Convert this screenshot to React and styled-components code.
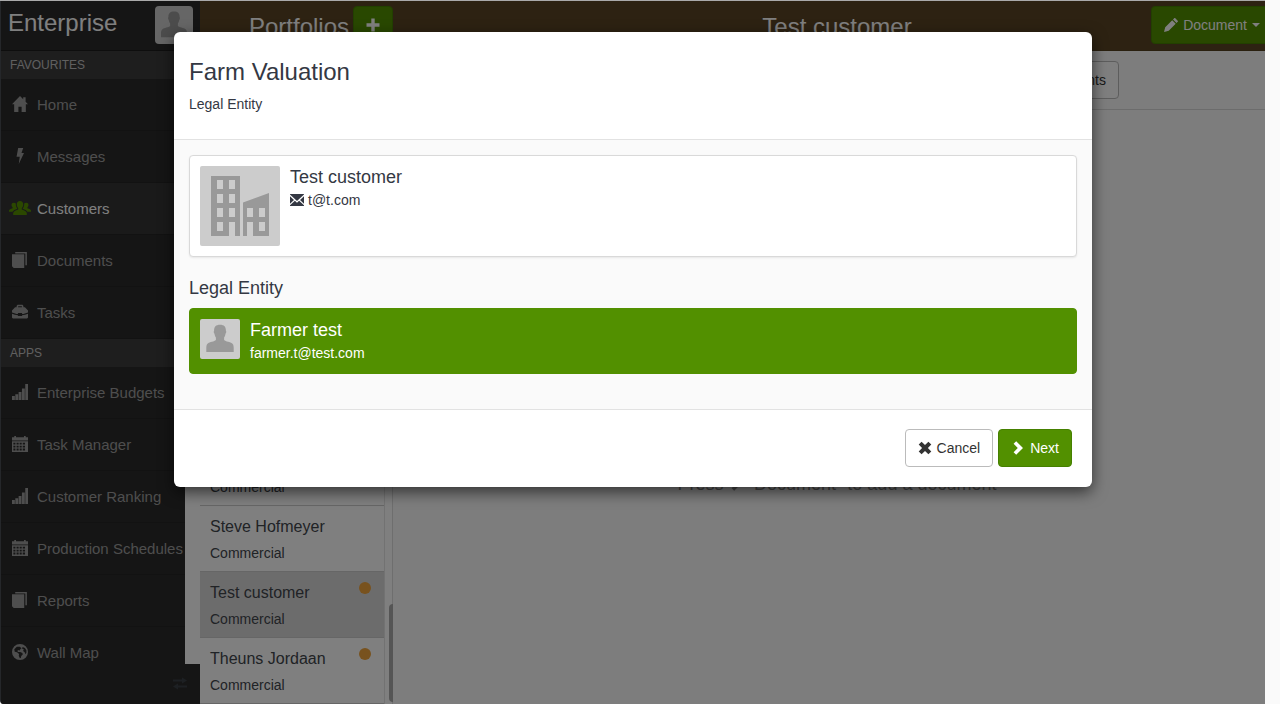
import React from 'react';
import styled, { createGlobalStyle } from 'styled-components';

const GlobalStyle = createGlobalStyle`
  *, *::before, *::after { box-sizing: border-box; }
  body {
    margin: 0;
    background: #fafafa;
    color: #343843;
    font: 14px/20px "Helvetica Neue", "Liberation Sans", Arial, sans-serif;
  }
  h1, h2, h3, p, ul { margin: 0; padding: 0; font-weight: 400; }
  ul { list-style: none; }
  button { font: inherit; cursor: pointer; }
`;

/* ---------- icons ---------- */

const Glyph = styled.svg`
  width: ${p => p.$size || 14}px;
  height: ${p => p.$size || 14}px;
  flex: none;
  fill: currentColor;
`;

const ICONS = {
  home: <path d="M7 0 0 7.2h1.900V14h3.700V9.300h2.800V14h3.700V7.200H14L11.900 5V1.200H9.800v1.700z" />,
  bolt: <path d="M5.400 0h4.400L8.300 4.300h2.200L5.900 14l.9-6.400H4z" />,
  documents: <path d="M2.800 0H13v11.500h-1.300V1.300H2.800zM0 2h10.700v12H1.500L0 12.500z" />,
  briefcase: (
    <path d="M4 2.800V2.200C4 1.200 4.700.7 5.500.7h3c.9 0 1.500.6 1.500 1.500v.6h1.300L14 5.600v1.800c-2 .8-3.500 1.200-5.200 1.400v-.9H5.200v.9C3.500 8.600 2 8.200 0 7.400V5.600l2.700-2.800zm1.300 0h3.400v-.5c0-.3-.2-.4-.4-.4H5.700c-.3 0-.4.200-.4.400zM0 8.500c1.700.7 3.400 1.100 5.200 1.300v.7h3.600v-.7c1.800-.2 3.500-.6 5.200-1.300v3.200c0 .6-.4 1-1 1H1c-.6 0-1-.4-1-1z" />
  ),
  signal: <path d="M0 10.500h2.500V14H0zM2.900 9h2.500v5H2.900zM5.800 7h2.500v7H5.800zM8.700 4h2.500v10H8.700zM11.600 0H14v14h-2.400z" />,
  calendar: (
    <path fillRule="evenodd" d="M0 1h2V0h1.500v1h7V0H12v1h2v3H0zM0 4.700h14V14H0zM1.200 6v1.500h1.800V6zm2.800 0v1.500h1.800V6zm2.700 0v1.500h1.800V6zm2.700 0v1.500h2V6zM1.200 8.500V10h1.800V8.500zm2.800 0V10h1.800V8.500zm2.700 0V10h1.800V8.500zm2.700 0V10h2V8.500zM1.200 11v1.700h1.800V11zm2.800 0v1.700h1.800V11zm2.700 0v1.700h1.800V11zm2.700 0v1.700h2V11z" />
  ),
  globe: (
    <path fillRule="evenodd" d="M7 0a7 7 0 1 1 0 14A7 7 0 0 1 7 0zM4.200 2.300 2 4.500l.4 2.200 2 .6 1.800 1.400-.3 1.500 1 2.200.8-.2.400-1.700 1.300-1.400-.3-1.200-1.900-.8-2-.2-.5-1 1-.7.800.7.400-.9L8.300 3.800 6.800 2.300zm5.200.3L8.700 4l1.600.7-.6 1.400 1.400 1.200.7 1.600.8-1.200V5.400l-1.300-2z" />
  ),
  transfer: <path d="M0 3.500h9V1.500L14 4.500 9 7.500v-2H0zM14 9.500H5v-2l-5 3 5 3v-2h9z" />,
  pencil: <path d="m11.300.3 2.400 2.400c.4.4.4.700 0 1.100l-1.200 1.200L9 1.500 10.200.3c.4-.4.7-.4 1.100 0zM8.200 2.300l3.500 3.500-7 7L0 14l1.200-4.700z" />,
  plus: <path d="M5.300.5h3.400v4.800h4.800v3.400H8.700v4.800H5.300V8.700H.5V5.300h4.800z" />,
  envelope: <path d="M0 1h14v.6L7 8 0 1.600zM0 3.200l4 3.700-4 3.900zm14 0v7.600l-4-3.900zM4.900 7.800 7 9.700l2.100-1.900 4.900 4.500v.7H0v-.7z" />,
  remove: <path d="M3.600.7 7 4.100 10.400.7l2.900 2.900L9.900 7l3.400 3.400-2.900 2.900L7 9.900l-3.400 3.400-2.900-2.900L4.100 7 .7 3.600z" />,
  next: <path d="M5.200.2 12 7l-6.800 6.800-2.600-2.600L6.800 7 2.600 2.800z" />,
};

const Icon = ({ name, size }) => (
  <Glyph $size={size} viewBox="0 0 14 14" aria-hidden="true">{ICONS[name]}</Glyph>
);

const GroupIcon = () => (
  <CustomersGlyph viewBox="0 0 22 14" aria-hidden="true">
    <path d="M11 0c2 0 3.200 1.300 3.200 3.300 0 1.600-.5 2.900-1.400 3.700v1.400c2.800 1 4.700 1.900 5 3.500V14H4.200v-2.100c.3-1.600 2.200-2.500 5-3.500V7C8.300 6.200 7.800 4.900 7.800 3.300 7.800 1.300 9 0 11 0z" />
    <path d="M4.800 1.700c.9 0 1.600.300 2 .900 0 2.100.2 3.500 1.400 4.800v.3c-2.300.9-4 1.700-4.600 3.100H0V9.600c.3-1 1.700-1.600 3.600-2.300v-1C2.900 5.700 2.500 5 2.500 4c0-1.500.9-2.300 2.300-2.300zM17.200 1.700c-.9 0-1.600.300-2 .9 0 2.100-.2 3.500-1.400 4.800v.3c2.300.9 4 1.700 4.600 3.100H22V9.600c-.3-1-1.700-1.600-3.600-2.300v-1c.7-.6 1.100-1.300 1.100-2.300 0-1.500-.9-2.300-2.300-2.300z" />
  </CustomersGlyph>
);

const CustomersGlyph = styled.svg`
  width: 22px;
  height: 14px;
  flex: none;
  fill: #569100;
`;

const Thumb = styled.svg`
  width: ${p => p.$size}px;
  height: ${p => p.$size}px;
  flex: none;
  border-radius: ${p => p.$radius || 2}px;
  background: #ccc;
  fill: #999;
`;

const PersonThumb = ({ size, radius }) => (
  <Thumb $size={size} $radius={radius} viewBox="0 0 40 40" role="img" aria-label="Person">
    <path d="M20 5.700c4.200 0 6 2 5.900 6 .6.600.4 2.300-.4 3-.3 1.800-.7 2.800-1.400 3.700v2.600c1.600 1.800 6.100 1.500 8.400 3.700.9.900 1.200 2.300 1.200 4.300v4H6.300v-4c0-2 .3-3.400 1.200-4.300 2.300-2.200 6.800-1.900 8.400-3.700v-2.600c-.7-.9-1.100-1.900-1.400-3.700-.8-.7-1-2.400-.4-3-.1-4 1.700-6 5.900-6z" />
  </Thumb>
);

const CompanyThumb = () => (
  <Thumb $size={80} viewBox="0 0 80 80" role="img" aria-label="Company">
    <path fillRule="evenodd" d="M11 10h29v60h-5V56h-6v14H11zM17 14v9h6v-9zm12 0v9h6v-9zM17 28v9h6v-9zm12 0v9h6v-9zM17 42v9h6v-9zm12 0v9h6v-9zM17 56v9h6v-9z" />
    <path fillRule="evenodd" d="M43 36.500 69 27v43H53V56h-6v14h-4zM47 42v9h6v-9zm12 0v9h6v-9zm0 14v9h6v-9z" />
  </Thumb>
);

/* ---------- application frame ---------- */

const Shell = styled.div`
  position: relative;
  display: flex;
  height: 100vh;
  min-height: 560px;
  margin-right: 15px;
  padding-left: 1px;
  overflow: hidden;
  border-top: 1px solid #aaa;
  border-bottom-left-radius: 4px;
  background: #4a4f55;
`;

const Sidebar = styled.aside`
  display: flex;
  flex-direction: column;
  flex: none;
  width: 199px;
  background: #2b2b2b;
`;

const Brand = styled.div`
  display: flex;
  align-items: flex-start;
  justify-content: space-between;
  flex: none;
  height: 50px;
  padding: 5px 7px;
  border-bottom: 1px solid #1c1c1c;
  color: #fff;
  font-size: 24px;
  line-height: 34px;
`;

const NavScroll = styled.nav`
  flex: 1;
  min-height: 0;
  padding-right: 15px;
  overflow: hidden;
  background: #fff;
`;

const NavGroup = styled.section`
  background: #2b2b2b;
`;

const NavHeading = styled.h2`
  height: 28px;
  padding-left: 9px;
  background: #3c3c3c;
  color: #c0c0c0;
  font-size: 12px;
  line-height: 28px;
`;

const NavLink = styled.a`
  display: flex;
  align-items: center;
  height: 52px;
  border-bottom: 1px solid #252525;
  background: ${p => (p.$active ? '#343434' : 'transparent')};
  color: ${p => (p.$active ? '#fff' : '#9c9c9c')};
  font-size: 15px;
  text-decoration: none;
  white-space: nowrap;
`;

const NavIcon = styled.span`
  display: flex;
  justify-content: center;
  flex: none;
  width: 36px;
  padding: 0 0 2px 2px;
`;

const SidebarFoot = styled.div`
  display: flex;
  align-items: center;
  justify-content: flex-end;
  flex: none;
  height: 40px;
  padding: 0 13px 2px 0;
  color: #3b4047;
`;

const ListPanel = styled.section`
  display: flex;
  flex-direction: column;
  flex: none;
  width: 193px;
  background: #fff;
`;

const PanelHeader = styled.header`
  display: flex;
  align-items: flex-start;
  justify-content: flex-end;
  gap: 4px;
  flex: none;
  height: 50px;
  padding: 5px 0;
  border-bottom: 1px solid #54401f;
  background: #5b4524;
`;

const PanelTitle = styled.h2`
  color: #fff;
  font-size: 24px;
  line-height: 42px;
  white-space: nowrap;
`;

const Button = styled.button`
  display: inline-flex;
  align-items: center;
  justify-content: center;
  gap: 5px;
  flex: none;
  height: 38px;
  padding: 0 12px;
  border: 1px solid ${p => (p.$primary ? '#458000' : '#bbb')};
  border-radius: 4px;
  background: ${p => (p.$primary ? '#529000' : '#fff')};
  color: ${p => (p.$primary ? '#fff' : '#333')};
  white-space: nowrap;
`;

const ListBody = styled.div`
  display: flex;
  flex: 1;
  min-height: 0;
  align-items: flex-end;
  justify-content: space-between;
  overflow: hidden;
  box-shadow: inset -1px 0 #ddd;
`;

const CustomerList = styled.ul`
  flex: none;
  width: 185px;
  border-right: 1px solid #e4e4e4;
`;

const CustomerRow = styled.li`
  display: flex;
  align-items: flex-end;
  justify-content: space-between;
  height: 66px;
  padding: 8px 13px 5px 10px;
  border-bottom: 1px solid #ccc;
  background: ${p => (p.$selected ? '#d9d9d9' : 'transparent')};
  color: #42464c;
`;

const RowName = styled.h3`
  font-size: 16px;
  line-height: 26px;
  white-space: nowrap;
`;

const RowType = styled.p`
  line-height: 26px;
`;

const Dot = styled.span`
  align-self: flex-start;
  width: 12px;
  height: 12px;
  margin-top: 2px;
  border-radius: 50%;
  background: #f0a43c;
`;

const ScrollThumb = styled.span`
  width: 4px;
  height: 98px;
  margin-bottom: 2px;
  border-radius: 4px 0 0 4px;
  background: #aaa;
`;

const Main = styled.main`
  display: flex;
  flex-direction: column;
  flex: 1;
  min-width: 0;
  margin-right: -16px;
  background: #fafafa;
`;

const MainHeader = styled.header`
  display: grid;
  grid-template-columns: 1fr auto 1fr;
  align-items: start;
  flex: none;
  height: 50px;
  padding: 5px 8px;
  border-bottom: 1px solid #54401f;
  background: #5b4524;

  ${Button} { grid-column: 3; justify-self: end; }
  ${PanelTitle} { grid-column: 2; }
`;

const Caret = styled.span`
  border: 4px solid transparent;
  border-top-color: currentColor;
  border-bottom: 0;
`;

const TabBar = styled.div`
  display: flex;
  justify-content: flex-end;
  flex: none;
  padding: 10px 162px 10px 10px;
  border-bottom: 1px solid #d8d8d8;
`;

const EmptyHint = styled.p`
  display: flex;
  align-items: center;
  justify-content: center;
  gap: 5px;
  padding-top: 362px;
  color: #8c8c8c;
  font-size: 18px;
  line-height: 24px;
`;

/* ---------- dialog ---------- */

const Backdrop = styled.div`
  position: absolute;
  inset: 0;
  padding: 31px 20px 20px 21px;
  background: rgba(0, 0, 0, 0.5);
`;

const Dialog = styled.div`
  max-width: 918px;
  margin: 0 auto;
  overflow: hidden;
  border-radius: 6px;
  background: #fff;
  box-shadow: 0 5px 15px rgba(0, 0, 0, 0.6);
`;

const DialogHeader = styled.header`
  height: 108px;
  padding: 24px 15px;
  border-bottom: 1px solid #e2e2e2;
`;

const DialogTitle = styled.h1`
  margin-bottom: 6px;
  font-size: 24px;
  line-height: 32px;
`;

const DialogBody = styled.div`
  padding: 15px 15px 35px;
  background: #fafafa;
`;

const Card = styled.div`
  display: flex;
  gap: 10px;
  padding: 10px;
  border: 1px solid ${p => (p.$selected ? '#529000' : '#d9d9d9')};
  border-radius: 4px;
  background: ${p => (p.$selected ? '#529000' : '#fff')};
  color: ${p => (p.$selected ? '#fff' : 'inherit')};
  box-shadow: ${p => (p.$selected ? 'none' : '0 1px 2px rgba(0, 0, 0, 0.08)')};
`;

const CardText = styled.div`
  display: flex;
  flex-direction: column;
  gap: 2px;
`;

const Subheading = styled.h2`
  font-size: 18px;
  line-height: 22px;
`;

const BodyHeading = styled(Subheading)`
  margin: 20px 0 9px;
`;

const Contact = styled.p`
  display: flex;
  align-items: center;
  gap: 4px;
`;

const DialogFooter = styled.footer`
  display: flex;
  justify-content: flex-end;
  gap: 5px;
  padding: 19px 20px 20px;
  border-top: 1px solid #e2e2e2;
`;

const favourites = [
  ['Home', 'home'],
  ['Messages', 'bolt'],
  ['Customers', 'group'],
  ['Documents', 'documents'],
  ['Tasks', 'briefcase'],
];

const apps = [
  ['Enterprise Budgets', 'signal'],
  ['Task Manager', 'calendar'],
  ['Customer Ranking', 'signal'],
  ['Production Schedules', 'calendar'],
  ['Reports', 'documents'],
  ['Wall Map', 'globe'],
];

const customers = [
  { id: 1, type: 'Commercial' },
  { id: 2, name: 'Steve Hofmeyer', type: 'Commercial' },
  { id: 3, name: 'Test customer', type: 'Commercial', flagged: true, selected: true },
  { id: 4, name: 'Theuns Jordaan', type: 'Commercial', flagged: true },
];

const NavSection = ({ title, items, active }) => (
  <NavGroup>
    <NavHeading>{title}</NavHeading>
    {items.map(([label, icon]) => (
      <NavLink key={label} href="#" $active={label === active}>
        <NavIcon>{icon === 'group' ? <GroupIcon /> : <Icon name={icon} size={16} />}</NavIcon>
        {label}
      </NavLink>
    ))}
  </NavGroup>
);

export default function App() {
  return (
    <>
      <GlobalStyle />
      <Shell>
        <Sidebar>
          <Brand>
            Enterprise
            <PersonThumb size={38} radius={4} />
          </Brand>
          <NavScroll>
            <NavSection title="FAVOURITES" items={favourites} active="Customers" />
            <NavSection title="APPS" items={apps} />
          </NavScroll>
          <SidebarFoot><Icon name="transfer" /></SidebarFoot>
        </Sidebar>

        <ListPanel>
          <PanelHeader>
            <PanelTitle>Portfolios</PanelTitle>
            <Button $primary aria-label="Add portfolio"><Icon name="plus" /></Button>
          </PanelHeader>
          <ListBody>
            <CustomerList>
              {customers.map(c => (
                <CustomerRow key={c.id} $selected={c.selected}>
                  <div>
                    {c.name && <RowName>{c.name}</RowName>}
                    <RowType>{c.type}</RowType>
                  </div>
                  {c.flagged && <Dot />}
                </CustomerRow>
              ))}
            </CustomerList>
            <ScrollThumb />
          </ListBody>
        </ListPanel>

        <Main>
          <MainHeader>
            <PanelTitle>Test customer</PanelTitle>
            <Button $primary>
              <Icon name="pencil" />
              Document
              <Caret />
            </Button>
          </MainHeader>
          <TabBar><Button>Documents</Button></TabBar>
          <EmptyHint>
            Press <Icon name="next" size={14} /> "Document" to add a document
          </EmptyHint>
        </Main>

        <Backdrop>
          <Dialog role="dialog" aria-modal="true" aria-labelledby="dialog-title">
            <DialogHeader>
              <DialogTitle id="dialog-title">Farm Valuation</DialogTitle>
              <p>Legal Entity</p>
            </DialogHeader>
            <DialogBody>
              <Card>
                <CompanyThumb />
                <CardText>
                  <Subheading>Test customer</Subheading>
                  <Contact><Icon name="envelope" />t@t.com</Contact>
                </CardText>
              </Card>
              <BodyHeading>Legal Entity</BodyHeading>
              <Card $selected>
                <PersonThumb size={40} />
                <CardText>
                  <Subheading>Farmer test</Subheading>
                  <Contact>farmer.t@test.com</Contact>
                </CardText>
              </Card>
            </DialogBody>
            <DialogFooter>
              <Button><Icon name="remove" />Cancel</Button>
              <Button $primary><Icon name="next" />Next</Button>
            </DialogFooter>
          </Dialog>
        </Backdrop>
      </Shell>
    </>
  );
}
